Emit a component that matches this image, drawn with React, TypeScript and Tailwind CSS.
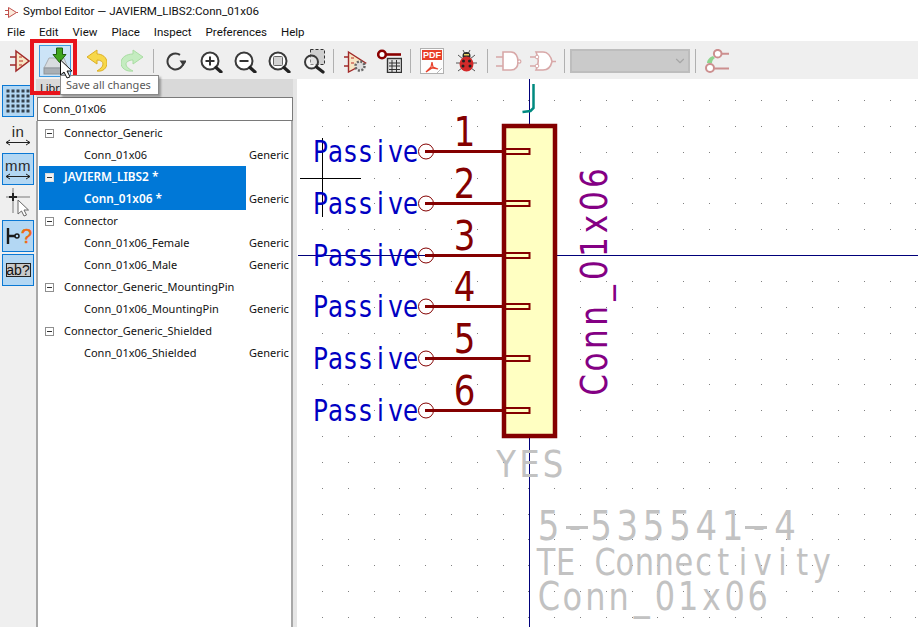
import type { ReactNode } from "react";
import { ChevronDown } from "lucide-react";

const menus = ["File", "Edit", "View", "Place", "Inspect", "Preferences", "Help"];

const rows = [
  { label: "Connector_Generic", top: true },
  { label: "Conn_01x06", desc: "Generic" },
  { label: "JAVIERM_LIBS2 *", top: true, selected: true },
  { label: "Conn_01x06 *", desc: "Generic", selected: true },
  { label: "Connector", top: true },
  { label: "Conn_01x06_Female", desc: "Generic" },
  { label: "Conn_01x06_Male", desc: "Generic" },
  { label: "Connector_Generic_MountingPin", top: true },
  { label: "Conn_01x06_MountingPin", desc: "Generic" },
  { label: "Connector_Generic_Shielded", top: true },
  { label: "Conn_01x06_Shielded", desc: "Generic" },
];

const pinYs = [151, 203, 255, 306, 358, 410];

function Magnifier({ kind }: { kind: "plus" | "minus" | "fit" }) {
  return (
    <svg className="shrink-0" width="23" height="24" viewBox="0 0 23 24" fill="none">
      <circle cx="10" cy="12" r="8.500" stroke="#3a3a3a" strokeWidth="2" fill="#fff" />
      <path d="M16 18.500l5 4.500" stroke="#222" strokeWidth="3.200" strokeLinecap="round" />
      {kind === "plus" && <path d="M5.500 12h9M10 7.500v9" stroke="#333" strokeWidth="2" />}
      {kind === "minus" && <path d="M5.500 12h9" stroke="#333" strokeWidth="2" />}
      {kind === "fit" && <rect x="5.500" y="7.500" width="9" height="9" rx="1" fill="#d4d4d4" stroke="#666" />}
    </svg>
  );
}

function Sep({ className }: { className: string }) {
  return <div className={`h-[24px] w-[1px] shrink-0 bg-[#b0b0b0] ${className}`} />;
}

function TopToolbar() {
  return (
    <div className="flex h-[38px] shrink-0 items-center bg-[#efefef] pl-[10px] pt-[2px]">
      <svg className="shrink-0" width="20" height="24" viewBox="0 0 20 24" fill="none">
        <path d="M6 2l13 10L6 22z" fill="#f7e6c4" stroke="#a12a2a" strokeWidth="1.500" />
        <path d="M0 8h6M0 16h6" stroke="#a12a2a" strokeWidth="1.500" />
        <path d="M9 8h3M9 12h4M9 16h3" stroke="#cf6a5a" strokeWidth="1.400" />
      </svg>
      <div className="ml-[9px] flex h-[32px] w-[32px] shrink-0 items-center justify-center border border-[#3b99e0] bg-[#cce4f7]">
        <svg width="30" height="30" viewBox="0 0 30 30" fill="none">
          <path d="M9 12h15l4 10H4z" fill="#d8dcdf" stroke="#a9afb4" />
          <rect x="4" y="22" width="24" height="6" fill="#a9afb4" stroke="#8d9398" />
          <path d="M16.500 2h6v6.500h3.500l-6.500 8-6.500-8h3.500z" fill="#3fa51e" stroke="#1f5f10" />
        </svg>
      </div>
      <svg className="ml-[16px] shrink-0" width="20" height="24" viewBox="0 0 20 24" fill="none">
        <path d="M10 1L0 8l10 7v-4c4 0 6 2 6 4 0 3-3 5-6 7 6 1 10-3 10-8 0-6-5-9-10-9z" fill="#f7d84a" stroke="#dcae24" />
      </svg>
      <svg className="ml-[14px] shrink-0" width="22" height="24" viewBox="0 0 22 24" fill="none">
        <path d="M12 1l10 7-10 7v-4c-4 0-7 2-7 4 0 3 3 5 7 7-7 1-12-3-12-8 0-6 6-9 12-9z" fill="#c4ecc0" stroke="#a8dca2" />
      </svg>
      <Sep className="ml-[10px]" />
      <svg className="ml-[12px] shrink-0" width="20" height="24" viewBox="0 0 20 24" fill="none">
        <path d="M14 5.800A8 8 0 1 0 17.500 13" stroke="#3a3a3a" strokeWidth="2" />
        <path d="M13.500 11.500h7.500l-3.700 5.500z" fill="#3a3a3a" />
      </svg>
      <div className="ml-[14px]">
        <Magnifier kind="plus" />
      </div>
      <div className="ml-[11px]">
        <Magnifier kind="minus" />
      </div>
      <div className="ml-[11px]">
        <Magnifier kind="fit" />
      </div>
      <svg className="ml-[13px] shrink-0" width="21" height="25" viewBox="0 0 21 25" fill="none">
        <rect x="6.500" y="0.500" width="14" height="15" fill="#cfcfcf" stroke="#333" strokeDasharray="3 2" />
        <circle cx="7.500" cy="13" r="6.500" stroke="#3a3a3a" strokeWidth="2" fill="#fff" fillOpacity="0.4" />
        <path d="M12.500 18l6.500 5" stroke="#222" strokeWidth="3.200" strokeLinecap="round" />
      </svg>
      <Sep className="ml-[8px]" />
      <svg className="ml-[10px] shrink-0" width="23" height="24" viewBox="0 0 23 24" fill="none">
        <path d="M4.500 3l17 11-17 9z" fill="#f7e6c4" stroke="#a12a2a" strokeWidth="1.400" />
        <path d="M0 8h4.500M0 17h4.500" stroke="#a12a2a" strokeWidth="1.500" />
        <path d="M7 9h3M7 14h3" stroke="#cf6a5a" strokeWidth="1.400" />
        <circle cx="16" cy="17" r="4.500" fill="#ddd" stroke="#666" strokeWidth="2.500" strokeDasharray="2 1.500" />
      </svg>
      <svg className="ml-[10px] shrink-0" width="25" height="24" viewBox="0 0 25 24" fill="none">
        <circle cx="5" cy="5.500" r="3.800" stroke="#8a0000" strokeWidth="2.600" fill="#fff" />
        <path d="M9 5.500h15" stroke="#8a0000" strokeWidth="2.600" />
        <rect x="10.500" y="9.500" width="14" height="14" fill="#e2e2e2" stroke="#333" strokeWidth="1.400" />
        <path d="M12 14h11M12 17h11M12 20.500h11M15 11v12M19.500 11v12" stroke="#333" />
      </svg>
      <Sep className="ml-[8px]" />
      <div className="ml-[9px] flex h-[26px] w-[24px] shrink-0 flex-col border border-[#b0b0b0] bg-[#fdfdfd] px-[1px] pt-[1px]">
        <div className="h-[10px] bg-[#e8402a] text-center font-['Liberation_Sans',sans-serif] text-[9px] font-bold leading-[10px] text-white">PDF</div>
        <svg width="20" height="13" viewBox="0 0 20 13" fill="none">
          <path d="M4 12l5-5 1-5 1 5 5 2-6-1z" stroke="#e8402a" strokeWidth="1.200" />
          <path d="M15 13l5-5" stroke="#b8b8b8" />
        </svg>
      </div>
      <svg className="ml-[12px] shrink-0" width="21" height="24" viewBox="0 0 21 24" fill="none">
        <path d="M2 6l5 4M19 6l-5 4M0 14h4M21 14h-4M2 22l4-3M19 22l-4-3M7 1l2 4M14 1l-2 4" stroke="#555" />
        <circle cx="10.500" cy="7" r="4" fill="#2a2a2a" />
        <path d="M8 5h5v1.500H8z" fill="#e8d060" />
        <ellipse cx="10.500" cy="15" rx="7" ry="7.500" fill="#d42a2a" />
        <circle cx="7.500" cy="12" r="1.500" fill="#222" />
        <circle cx="13.500" cy="12" r="1.500" fill="#222" />
        <circle cx="7" cy="17" r="1.500" fill="#222" />
        <circle cx="14" cy="17" r="1.500" fill="#222" />
      </svg>
      <Sep className="ml-[10px]" />
      <svg className="ml-[8px] shrink-0" width="26" height="24" viewBox="0 0 26 24" fill="none">
        <path d="M0 8h7M0 17h7" stroke="#d8a8a8" strokeWidth="1.600" />
        <path d="M7 3h8c5 0 7 5 7 9.500S20 21 15 21H7z" fill="#fff" stroke="#d8a8a8" strokeWidth="1.600" />
        <circle cx="23.300" cy="12.500" r="1.600" fill="#fff" stroke="#d8a8a8" strokeWidth="1.200" />
      </svg>
      <svg className="ml-[8px] shrink-0" width="26" height="24" viewBox="0 0 26 24" fill="none">
        <path d="M0 8h5M0 17h5M22 12.500h4" stroke="#d8a8a8" strokeWidth="1.600" />
        <path d="M6 3h7c5 0 8 5 9 9.500-1 4.500-4 8.500-9 8.500H6c3-6 3-12 0-18z" fill="#fff" stroke="#d8a8a8" strokeWidth="1.600" />
        <circle cx="7" cy="8" r="1.800" fill="#fff" stroke="#d8a8a8" />
        <circle cx="7" cy="17" r="1.800" fill="#fff" stroke="#d8a8a8" />
      </svg>
      <Sep className="ml-[8px]" />
      <div className="ml-[5px] flex h-[24px] w-[120px] shrink-0 items-center justify-end border-2 border-[#bdbdbd] bg-[#cacaca] pr-[1px]">
        <ChevronDown size={14} color="#a6a6a6" />
      </div>
      <Sep className="ml-[5px]" />
      <svg className="ml-[9px] shrink-0" width="24" height="24" viewBox="0 0 24 24" fill="none">
        <path d="M2 14c0-3 3-6 6-7l2 2c-2 1-3 3-3 5z" fill="#8fd48f" />
        <circle cx="12.700" cy="4.700" r="3.800" stroke="#cc8f8f" strokeWidth="2" fill="#fff" />
        <path d="M16.500 4.700H24M9.500 19.500H24" stroke="#cc8f8f" strokeWidth="2" />
        <circle cx="5" cy="19" r="4" stroke="#cc8f8f" strokeWidth="2" fill="#fff" />
      </svg>
    </div>
  );
}

function ToggleButton({ on, children }: { on?: boolean; children: ReactNode }) {
  return (
    <div className={`flex h-[32px] w-[32px] items-center justify-center border ${on ? "border-[#0a78d4] bg-[#b3d7f3]" : "border-transparent"}`}>
      {children}
    </div>
  );
}

function UnitIcon({ label }: { label: string }) {
  return (
    <div className="flex flex-col items-center font-['Liberation_Sans',sans-serif] text-[15px] leading-[15px] text-[#2a2a2a]">
      <span className="tracking-[0.5px]">{label}</span>
      <svg width="26" height="7" viewBox="0 0 26 7" fill="none">
        <path d="M1 3.500h24M5 1L1 3.500 5 6M21 1l4 2.500L21 6" stroke="#222" />
      </svg>
    </div>
  );
}

function LeftToolbar() {
  return (
    <div className="flex w-[36px] shrink-0 flex-col items-start gap-[1.750px] bg-[#efefef] pl-[2px] pt-[6px]">
      <ToggleButton on>
        <svg width="30" height="30" viewBox="0 0 30 30">
          {[3.500, 8.500, 13.500, 18.500, 23.500].flatMap((x) =>
            [3.500, 8.500, 13.500, 18.500, 23.500].map((y) => <rect key={`${x}-${y}`} x={x} y={y} width="3" height="3" fill="#34424f" />),
          )}
        </svg>
      </ToggleButton>
      <ToggleButton>
        <UnitIcon label="in" />
      </ToggleButton>
      <ToggleButton on>
        <UnitIcon label="mm" />
      </ToggleButton>
      <ToggleButton>
        <svg width="30" height="30" viewBox="0 0 30 30" fill="none">
          <path d="M3 10h24M10 1v25" stroke="#b4b4b4" strokeWidth="2" />
          <path d="M6 10h8M10 6v8" stroke="#222" strokeWidth="2" />
          <path d="M15 13v14l3.500-3 2.500 5 2.500-1-2.500-5h4.500z" fill="#fff" stroke="#666" />
        </svg>
      </ToggleButton>
      <ToggleButton on>
        <svg width="30" height="30" viewBox="0 0 30 30" fill="none">
          <path d="M5 7v16M5 15h7" stroke="#1a1a1a" strokeWidth="2.400" />
          <circle cx="14" cy="15" r="2" stroke="#1a1a1a" strokeWidth="1.500" />
          <text x="18" y="22" fontSize="20" fontFamily="Liberation Sans, sans-serif" fill="#f06a10" stroke="#f06a10" strokeWidth="0.500">?</text>
        </svg>
      </ToggleButton>
      <ToggleButton on>
        <div className="flex h-[14px] w-[25px] items-center justify-center border border-[#222] bg-[#c9c9c9] font-['Liberation_Sans',sans-serif] text-[14px] leading-none text-[#111]">
          ab?
        </div>
      </ToggleButton>
    </div>
  );
}

function LibraryPanel() {
  return (
    <div className="flex w-[257px] shrink-0 flex-col bg-[#efefef] font-['Noto_Sans',sans-serif] text-[11px] text-[#111]">
      <div className="h-[18px] shrink-0 bg-[#d9d9d9] pl-[4px] leading-[17px]">Libraries</div>
      <div className="ml-[1px] flex h-[24px] shrink-0 items-center border border-[#7a7a7a] bg-white pl-[5px]">Conn_01x06</div>
      <div className="flex-1 border-x-2 border-[#a8a8a8] bg-white pl-[1px] pt-[1px]">
        {rows.map((row) => (
          <div key={row.label} className="flex h-[22px] items-center">
            <div className={`flex h-[22px] w-[207px] shrink-0 items-center ${row.selected ? "bg-[#0078d7] text-[11.800px] font-semibold text-white" : ""}`}>
              {row.top ? (
                <>
                  <div className={`ml-[6px] flex h-[9px] w-[9px] items-center justify-center border ${row.selected ? "border-[#dcdcdc] bg-[#f2f2f2]" : "border-[#8f8f8f] bg-white"}`}>
                    <div className="h-[1px] w-[5px] bg-[#333]" />
                  </div>
                  <span className="ml-[10px]">{row.label}</span>
                </>
              ) : (
                <span className="ml-[45px]">{row.label}</span>
              )}
            </div>
            {row.desc && <span className="ml-[3px]">{row.desc}</span>}
          </div>
        ))}
      </div>
    </div>
  );
}

function StrokeText({ text, x, y, pitch, size, sx, fill, rotate }: { text: string; x: number; y: number; pitch: number; size: number; sx: number; fill: string; rotate?: boolean }) {
  const xs = text.split("").map((_, i) => (i * pitch) / sx);
  return (
    <text
      transform={`translate(${x} ${y})${rotate ? " rotate(-90)" : ""} scale(${sx} 1)`}
      x={xs.join(" ")}
      textAnchor="middle"
      fontFamily="'DejaVu Sans', sans-serif"
      fontSize={size}
      fill={fill}
    >
      {text}
    </text>
  );
}

function SchematicCanvas() {
  const dots = [];
  for (let x = 322; x < 918; x += 25.8) {
    for (let y = 100; y < 627; y += 25.85) {
      dots.push(<rect key={`${x}-${y}`} x={Math.round(x)} y={Math.round(y)} width="1" height="1" fill="#808080" />);
    }
  }
  return (
    <div className="min-w-0 flex-1 overflow-hidden border-l-4 border-[#e6e6e6] bg-white">
      {/* viewBox uses page coordinates */}
      <svg width="621" height="548" viewBox="297 79 621 548" className="block">
        {dots}
        <path d="M529.500 79v548M298 255.500h620" stroke="#00007a" strokeWidth="1" />
        <path d="M322.500 138v79M300 178.500h61" stroke="#000" strokeWidth="1" />
        <path d="M533.500 84v24l-3 3-8 1" stroke="#008a80" strokeWidth="2.500" fill="none" />
        <rect x="504" y="126" width="51" height="310" fill="#ffffc2" stroke="#840000" strokeWidth="4.500" />
        {pinYs.map((y, i) => (
          <g key={y}>
            <circle cx="426" cy={y + 0.5} r="7.500" fill="none" stroke="#840000" strokeWidth="1" />
            <path d={`M425 ${y + 0.5}h80`} stroke="#840000" strokeWidth="2.800" />
            <rect x="505" y={y - 2} width="24.500" height="5" fill="none" stroke="#840000" strokeWidth="2" />
            <StrokeText text="Passive" x={320.5} y={y + 11} pitch={15} size={30} sx={0.82} fill="#0000c2" />
            <StrokeText text={String(i + 1)} x={464.5} y={y - 5} pitch={0} size={40} sx={0.85} fill="#840000" />
          </g>
        ))}
        <StrokeText text="Conn_01x06" x={607} y={385} pitch={23} size={38} sx={0.82} fill="#840084" rotate />
        <StrokeText text="YES" x={506} y={477} pitch={23.5} size={38} sx={0.85} fill="#c2c2c2" />
        {/* the hyphens of the stroke font run wider than any installed face */}
        <path d="M566 527.500h22M745 527.500h22" stroke="#c2c2c2" strokeWidth="3" />
        <StrokeText text="5-535541-4" x={548.5} y={540} pitch={26.3} size={40} sx={0.85} fill="#c2c2c2" />
        <StrokeText text="TE Connectivity" x={546} y={575} pitch={19.7} size={38} sx={0.8} fill="#c2c2c2" />
        <StrokeText text="Conn_01x06" x={549} y={610} pitch={23.2} size={39} sx={0.82} fill="#c2c2c2" />
      </svg>
    </div>
  );
}

export default function App() {
  return (
    <div className="relative flex h-[627px] w-[918px] flex-col overflow-hidden bg-white font-['Roboto',sans-serif]">
      <div className="flex h-[24px] shrink-0 items-center pl-[5px] text-[11.600px] text-[#111]">
        <svg width="13" height="13" viewBox="0 0 13 13" fill="none">
          <path d="M3.500 1.500l8 5-8 5z" fill="#fbeadb" stroke="#c0504d" />
          <path d="M0 4.500h3.500M0 8.500h3.500M11.500 6.500H13" stroke="#c0504d" />
        </svg>
        <span className="ml-[5px]">Symbol Editor — JAVIERM_LIBS2:Conn_01x06</span>
      </div>
      <div className="flex h-[17px] shrink-0 items-center gap-[14px] pl-[7px] text-[11.500px] text-[#111]">
        {menus.map((m) => (
          <span key={m}>{m}</span>
        ))}
      </div>
      <TopToolbar />
      <div className="flex min-h-0 flex-1">
        <LeftToolbar />
        <LibraryPanel />
        <SchematicCanvas />
      </div>

      {/* red highlight, tooltip and cursor lie over the toolbar */}
      <div className="absolute left-[30px] top-[39px] h-[56px] w-[47px] border-[4px] border-[#e8141c]" />
      <div className="absolute left-[60px] top-[75px] h-[20px] w-[99px] border border-[#8a8a8a] bg-white pl-[5px] font-['Noto_Sans',sans-serif] text-[11px] leading-[18px] text-[#575757] shadow-[2px_2px_2px_rgba(0,0,0,0.3)]">
        Save all changes
      </div>
      <svg className="absolute left-[59px] top-[59px]" width="15" height="20" viewBox="0 0 15 20">
        <path d="M1.500 1v15l3.500-3 3 6 3-1.200-3-5.800h5z" fill="#fff" stroke="#111" />
      </svg>
    </div>
  );
}
